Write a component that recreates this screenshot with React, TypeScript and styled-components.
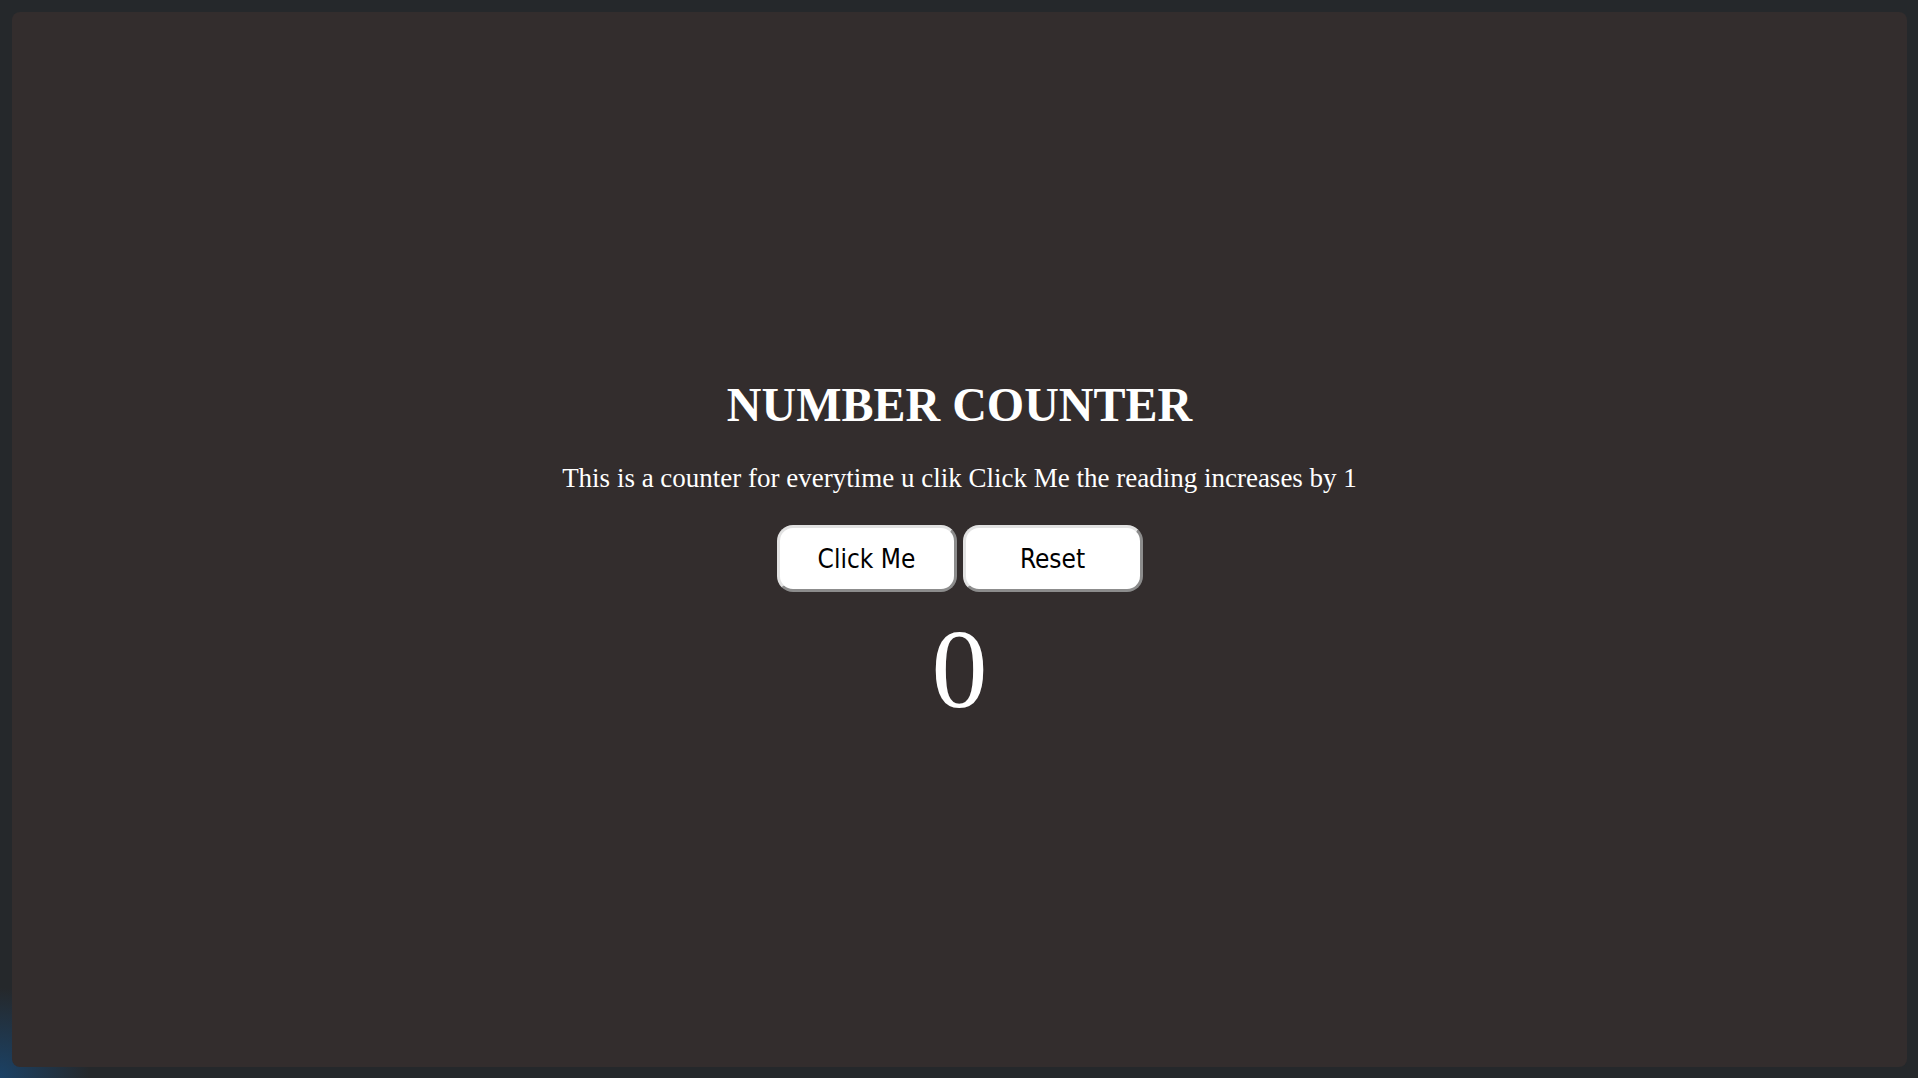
import { useState } from 'react';

import styled, { createGlobalStyle } from 'styled-components';

const GlobalStyle = createGlobalStyle`
  html, body {
    margin: 0;
    padding: 0;
    height: 100%;
  }

  body {
    background:
      radial-gradient(circle at 0% 100%, #1b4266 0%, rgba(27, 66, 102, 0) 90px),
      #25282b;
  }

  #root {
    height: 100%;
  }
`;

const App = () => {
  const [count, setCount] = useState(0);

  return (
    <>
      <GlobalStyle />
      <Page>
        <Panel>
          <Title>NUMBER COUNTER</Title>
          <Description>
            This is a counter for everytime u clik Click Me the reading increases by 1
          </Description>
          <Buttons>
            <Button onClick={() => setCount(count + 1)}>Click Me</Button>
            <Button onClick={() => setCount(0)}>Reset</Button>
          </Buttons>
          <Reading>{count}</Reading>
        </Panel>
      </Page>
    </>
  )
}

export default App;

const Page = styled.div`
  height: 100%;
  box-sizing: border-box;
  padding: 12px 11px 11px 12px;
  display: flex;
`;

const Panel = styled.main`
  flex: 1;
  background: #332d2d;
  border-radius: 8px;
  display: flex;
  flex-direction: column;
  align-items: center;
  justify-content: center;
  color: #ffffff;
  font-family: "Liberation Serif", "Times New Roman", serif;
  padding-top: 32px;
`;

const Title = styled.h1`
  margin: 0 0 31px;
  font-size: 48px;
  font-weight: 700;
  line-height: 1.15;
`;

const Description = styled.p`
  margin: 0 0 31px;
  font-size: 27px;
  line-height: 1.15;
`;

const Buttons = styled.div`
  display: flex;
  gap: 6px;
`;

const Button = styled.button`
  width: 180px;
  height: 67px;
  background: #ffffff;
  color: #000000;
  border-style: solid;
  border-width: 3px;
  border-color: #e2e2e2 #8c8c8c #8c8c8c #e2e2e2;
  border-radius: 16px;
  font-family: "DejaVu Sans Condensed", "DejaVu Sans", sans-serif;
  font-size: 26px;
  cursor: pointer;
`;

const Reading = styled.div`
  font-size: 112px;
  line-height: 1.15;
  margin-top: 13px;
`;
